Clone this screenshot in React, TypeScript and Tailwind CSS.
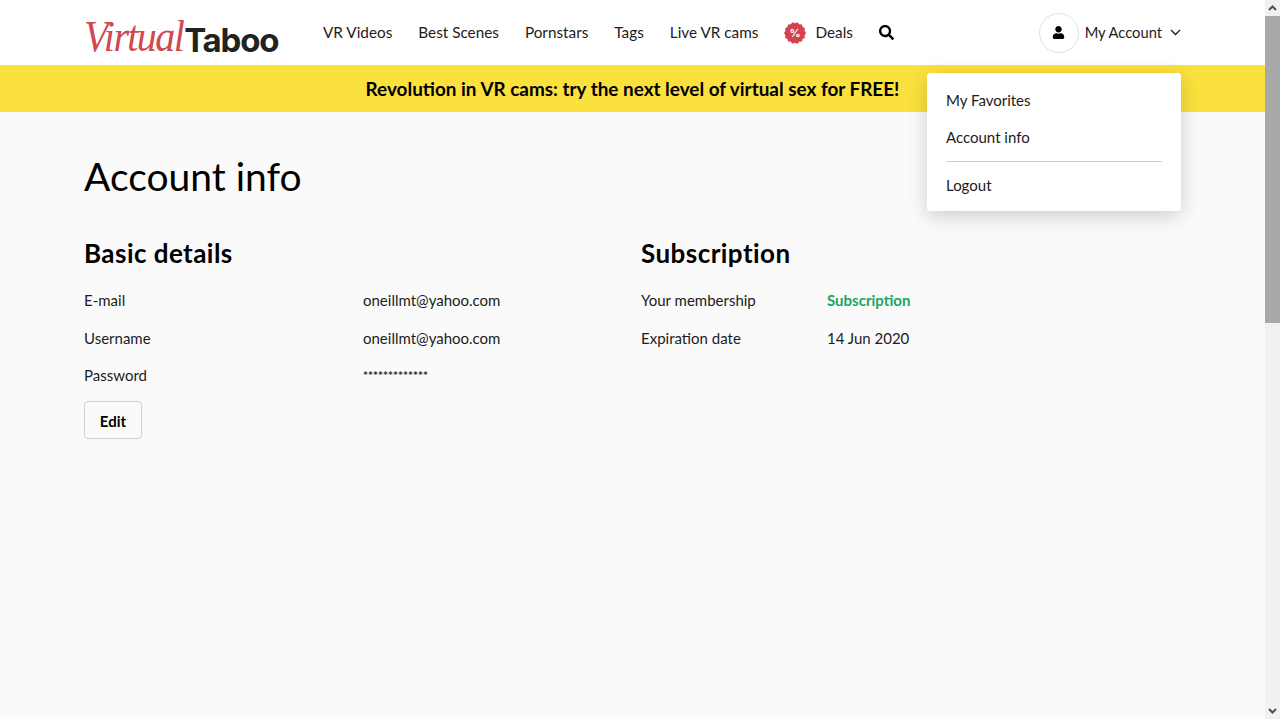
import { FaSearch, FaUser } from "react-icons/fa";

const navLinks = [
  { label: "VR Videos", className: "ml-[44px]" },
  { label: "Best Scenes", className: "ml-[26px]" },
  { label: "Pornstars", className: "ml-[26px]" },
  { label: "Tags", className: "ml-[26px]" },
  { label: "Live VR cams", className: "ml-[26px]" },
];

// scalloped edge of the deals badge
const badgePoints = Array.from({ length: 28 }, (_, i) => {
  const r = i % 2 === 0 ? 11 : 9.8;
  const a = (i / 28) * Math.PI * 2;
  return `${11 + r * Math.cos(a)},${11 + r * Math.sin(a)}`;
}).join(" ");

function Logo() {
  return (
    <div className="mt-[12px] flex w-[195px] items-baseline whitespace-nowrap">
      <span className="inline-block origin-bottom scale-y-110 font-['Liberation_Serif',serif] text-[40px] leading-none tracking-[-1.6px] text-[#cf4a50] italic">
        Virtual
      </span>
      <span className="ml-[1px] font-['Inter',sans-serif] text-[33px] leading-none font-bold tracking-[-1.2px] text-[#222222]">
        Taboo
      </span>
    </div>
  );
}

function Row({ label, value, width }: { label: string; value: React.ReactNode; width: string }) {
  return (
    <div className="flex h-[37.5px] items-center">
      <div className={width}>{label}</div>
      <div>{value}</div>
    </div>
  );
}

function Scrollbar() {
  return (
    <div className="flex h-[719px] w-[15px] shrink-0 flex-col bg-[#f1f1f1]">
      <div className="flex h-[16px] items-center justify-center">
        <svg width="9" height="6" viewBox="0 0 9 6">
          <path d="M1 5l3.5-3.5L8 5" fill="none" stroke="#505050" strokeWidth="2" />
        </svg>
      </div>
      <div className="h-[307px] bg-[#a8a8a8]" />
      <div className="flex-1" />
      <div className="flex h-[16px] items-center justify-center">
        <svg width="9" height="6" viewBox="0 0 9 6">
          <path d="M1 1l3.5 3.5L8 1" fill="none" stroke="#505050" strokeWidth="2" />
        </svg>
      </div>
    </div>
  );
}

export default function App() {
  return (
    <div className="flex h-[719px] overflow-hidden font-['Lato',sans-serif] text-[15px] text-[#1c1c1c]">
      <div className="relative flex-1 bg-[#fafafa]">
        <header className="flex h-[65px] items-center bg-white px-[84px] text-[15.3px]">
          <Logo />
          {navLinks.map((link) => (
            <a key={link.label} className={`${link.className} whitespace-nowrap`}>
              {link.label}
            </a>
          ))}
          <a className="ml-[26px] flex items-center gap-[9px]">
            <svg width="22" height="22" viewBox="0 0 22 22">
              <polygon points={badgePoints} fill="#d2444a" />
              <text x="11" y="15" textAnchor="middle" fill="#ffffff" fontSize="11" fontWeight="700" fontFamily="Inter, sans-serif">
                %
              </text>
            </svg>
            Deals
          </a>
          <FaSearch className="ml-[26px] text-[15px] text-black" />
          <div className="ml-auto flex items-center text-[14.7px]">
            <div className="flex h-[40px] w-[40px] items-center justify-center rounded-full border border-[#e0e0e0]">
              <FaUser className="text-[13px] text-black" />
            </div>
            <span className="ml-[6px]">My Account</span>
            <svg className="ml-[8px]" width="11" height="7" viewBox="0 0 11 7">
              <path d="M1 1l4.5 4.5L10 1" fill="none" stroke="#1c1c1c" strokeWidth="1.3" />
            </svg>
          </div>
        </header>

        <div className="flex h-[47px] items-center justify-center bg-[#fbe13d] pt-[1px] text-[18.9px] font-bold text-black">
          Revolution in VR cams: try the next level of virtual sex for FREE!
        </div>

        <main className="px-[84px]">
          <h1 className="mt-[40px] text-[39px] leading-[48px] font-normal text-black">Account info</h1>
          <div className="mt-[37px] grid grid-cols-[557px_1fr]">
            <section>
              <h2 className="mb-[12.7px] text-[26px] leading-[32px] font-bold tracking-[0.45px] text-black">Basic details</h2>
              <Row label="E-mail" value="oneillmt@yahoo.com" width="w-[279px]" />
              <Row label="Username" value="oneillmt@yahoo.com" width="w-[279px]" />
              <Row
                label="Password"
                value={<span className="relative -top-[2px] font-['Inter',sans-serif] text-[10px]">*************</span>}
                width="w-[279px]"
              />
              <button className="mt-[6.8px] h-[38px] w-[58px] rounded-[4px] border border-[#d0d0d0] pt-[2px] font-bold text-black">
                Edit
              </button>
            </section>
            <section>
              <h2 className="mb-[12.7px] text-[26px] leading-[32px] font-bold tracking-[0.45px] text-black">Subscription</h2>
              <Row
                label="Your membership"
                value={<span className="font-bold text-[#22a45d]">Subscription</span>}
                width="w-[186px]"
              />
              <Row label="Expiration date" value="14 Jun 2020" width="w-[186px]" />
            </section>
          </div>
        </main>

        <div className="absolute top-[73px] left-[927px] flex h-[138px] w-[254px] flex-col rounded-[3px] bg-white px-[19px] shadow-[0_5px_20px_rgba(0,0,0,0.18)]">
          <a className="mt-[17px] leading-[20px]">My Favorites</a>
          <a className="mt-[17px] leading-[20px]">Account info</a>
          <div className="mt-[14px] h-px bg-[#cccccc]" />
          <a className="mt-[13px] leading-[20px]">Logout</a>
        </div>
      </div>
      <Scrollbar />
    </div>
  );
}
